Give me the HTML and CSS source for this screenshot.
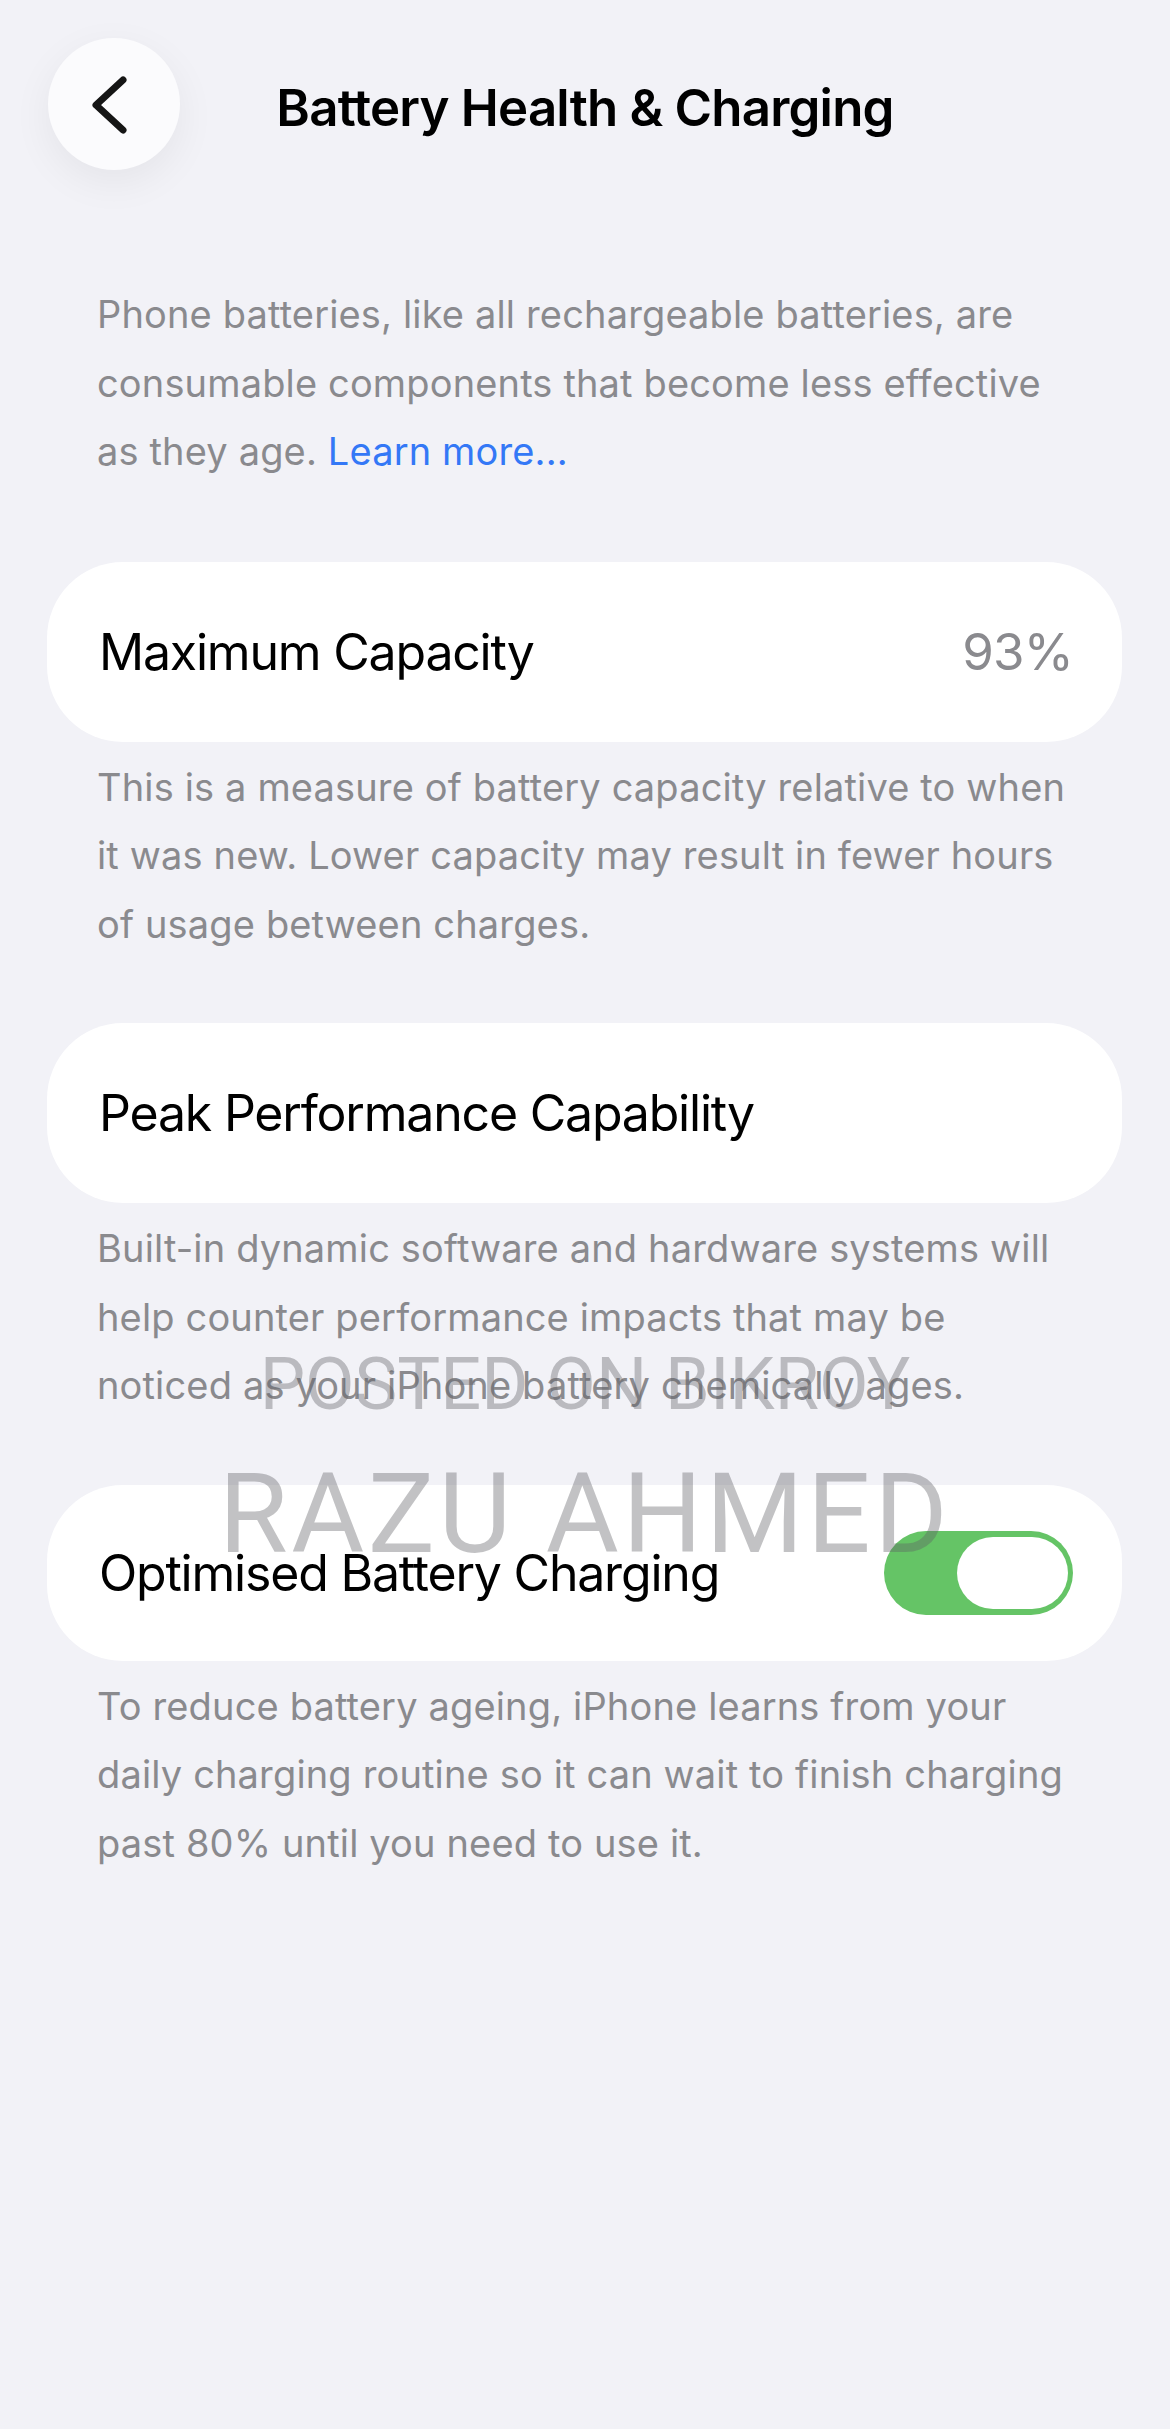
FILE: index.html
```html
<!DOCTYPE html>
<html lang="en">

<head>
  <meta charset="UTF-8" />
  <meta name="viewport" content="width=device-width, initial-scale=1.0" />
  <title>Battery Health &amp; Charging</title>
  <link rel="stylesheet" href="styles.css">
</head>

<body>
  <div class="screen">
    <header class="nav">
      <button class="back-btn" aria-label="Back">
        <svg width="132" height="132" viewBox="0 0 132 132">
          <path d="M75 42 L48 67 L75 92" fill="none" stroke="#151515" stroke-width="7" stroke-linecap="round" stroke-linejoin="round" />
        </svg>
      </button>
      <h1 class="nav-title">Battery Health &amp; Charging</h1>
      <span></span>
    </header>

    <main class="content">
      <p class="footnote intro">
        Phone batteries, like all rechargeable batteries, are<br>
        consumable components that become less effective<br>
        as they age. <a href="#">Learn more...</a>
      </p>

      <section class="group">
        <div class="row">
          <span class="row-label">Maximum Capacity</span>
          <span class="row-value">93%</span>
        </div>
        <p class="footnote">
          This is a measure of battery capacity relative to when<br>
          it was new. Lower capacity may result in fewer hours<br>
          of usage between charges.
        </p>
      </section>

      <section class="group">
        <div class="row">
          <span class="row-label">Peak Performance Capability</span>
        </div>
        <p class="footnote">
          Built-in dynamic software and hardware systems will<br>
          help counter performance impacts that may be<br>
          noticed as your iPhone battery chemically ages.
        </p>
      </section>

      <section class="group">
        <div class="row row-switch">
          <span class="row-label">Optimised Battery Charging</span>
          <span class="toggle on"><span class="knob"></span></span>
        </div>
        <p class="footnote">
          To reduce battery ageing, iPhone learns from your<br>
          daily charging routine so it can wait to finish charging<br>
          past 80% until you need to use it.
        </p>
      </section>
    </main>

    <!-- watermark sits over the content -->
    <div class="watermark">
      <div class="wm-small">POSTED ON BIKROY</div>
      <div class="wm-big">RAZU AHMED</div>
    </div>
  </div>
</body>

</html>
```

FILE: styles.css
```css
* {
  box-sizing: border-box;
}

body {
  margin: 0;
  background: #f2f2f7;
  font-family: Inter, "Noto Sans", sans-serif;
  color: #000;
}

.screen {
  position: relative;
  width: 1170px;
  min-height: 2429px;
  background: #f2f2f7;
  overflow: hidden;
}

.nav {
  display: grid;
  grid-template-columns: 1fr auto 1fr;
  align-items: center;
  padding: 38px 48px 0;
}

.back-btn {
  width: 132px;
  height: 132px;
  padding: 0;
  border: none;
  border-radius: 50%;
  background: #fbfbfd;
  box-shadow: 0 12px 40px rgba(0, 0, 0, 0.06);
  display: flex;
  align-items: center;
  justify-content: center;
  cursor: pointer;
}

.nav-title {
  margin: 7px 0 0;
  font-size: 51px;
  font-weight: 600;
  letter-spacing: -0.8px;
  white-space: nowrap;
}

.content {
  display: flex;
  flex-direction: column;
  gap: 65px;
  padding: 0 48px 0 47px;
}

.footnote {
  margin: 0;
  padding: 0 50px;
  font-size: 38px;
  line-height: 68.5px;
  color: #8a8a8e;
  letter-spacing: 0.15px;
}

.footnote a {
  color: #3478f6;
  text-decoration: none;
}

.intro {
  margin-top: 110px;
  margin-bottom: 11px;
}

.group .footnote {
  margin-top: 11px;
}

.row {
  height: 180px;
  display: flex;
  align-items: center;
  justify-content: space-between;
  padding: 0 49px 0 52px;
  background: #fff;
  border-radius: 76px;
}

.row-switch {
  height: 176px;
}

.row-label {
  font-size: 50px;
  letter-spacing: -1.2px;
}

.row-value {
  font-size: 51px;
  color: #8a8a8e;
  letter-spacing: -0.8px;
}

.toggle {
  width: 189px;
  height: 84px;
  border-radius: 42px;
  background: #e5e5ea;
  display: flex;
  align-items: center;
  padding: 0 5px;
}

.toggle.on {
  background: #65c466;
  justify-content: flex-end;
}

.knob {
  width: 111px;
  height: 72px;
  border-radius: 36px;
  background: #fff;
}

.watermark {
  position: absolute;
  top: 1349px;
  left: 0;
  right: 0;
  text-align: center;
  font-family: Roboto, "Noto Sans", sans-serif;
  color: rgba(95, 95, 100, 0.38);
  line-height: 1;
  pointer-events: none;
}

.wm-small {
  font-size: 72px;
}

.wm-big {
  margin-top: 37px;
  font-size: 112px;
  letter-spacing: 3.5px;
}
```
